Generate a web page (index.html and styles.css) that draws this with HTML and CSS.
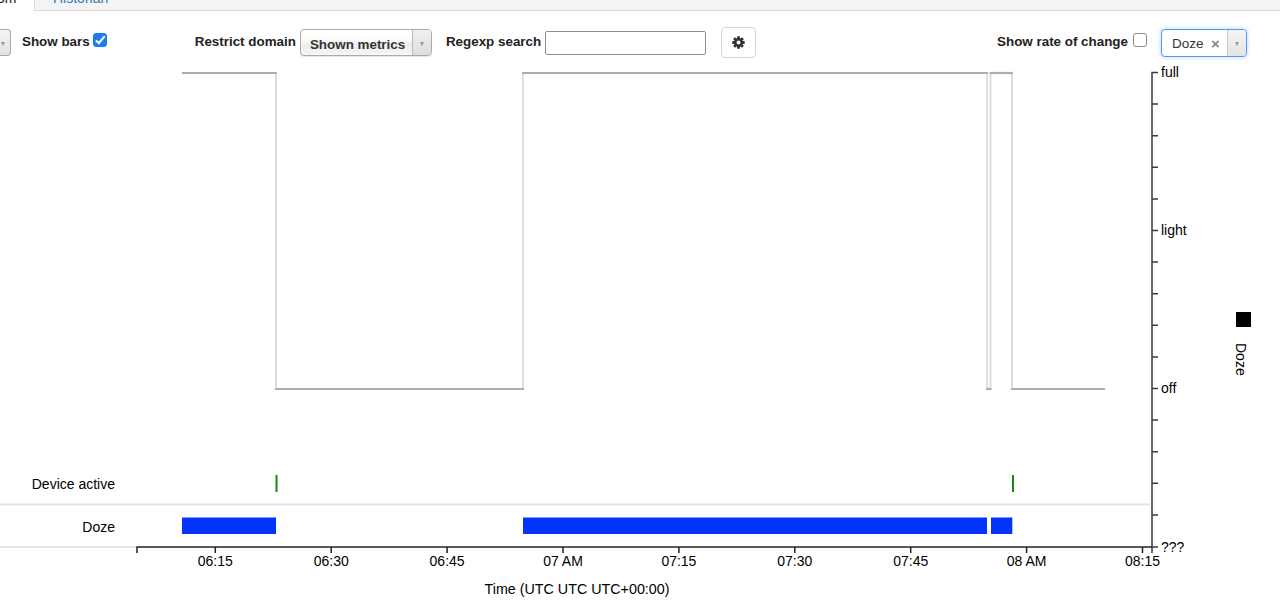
FILE: index.html
```html
<!DOCTYPE html>
<html>
<head>
<meta charset="utf-8">
<title>Historian</title>
<link rel="stylesheet" href="styles.css">
</head>
<body>
<div class="tabs">
  <div class="tab tab-active"><span class="tab-text">om</span></div>
  <div class="tab tab-inactive"><span class="tab-text tab-link">Historian</span></div>
</div>
<div class="controls">
  <div class="stub"><span class="tri"></span></div>
  <span class="lbl lbl-bars">Show bars</span>
  <span class="cb cb-checked"></span>
  <span class="lbl lbl-restrict">Restrict domain</span>
  <div class="chosen chosen-shown">
    <span class="chosen-text">Shown metrics</span>
    <span class="chosen-arrow"><span class="tri"></span></span>
  </div>
  <span class="lbl lbl-regexp">Regexp search</span>
  <span class="search"></span>
  <span class="gear-btn">
    <svg class="gear" width="13" height="13" viewBox="-6.5 -6.5 13 13">
      <g fill="#333">
        <rect x="-1.4" y="-6.2" width="2.8" height="12.4" rx="0.4"/>
        <rect x="-1.4" y="-6.2" width="2.8" height="12.4" rx="0.4" transform="rotate(45)"/>
        <rect x="-1.4" y="-6.2" width="2.8" height="12.4" rx="0.4" transform="rotate(90)"/>
        <rect x="-1.4" y="-6.2" width="2.8" height="12.4" rx="0.4" transform="rotate(135)"/>
        <circle r="4.4"/>
      </g>
      <circle r="1.9" fill="#fff"/>
    </svg>
  </span>
  <div class="right-group">
    <span class="lbl">Show rate of change</span>
    <span class="cb"></span>
    <div class="chosen chosen-doze">
      <span class="doze-text">Doze</span>
      <span class="doze-x">×</span>
      <span class="chosen-arrow doze-arrow"><span class="tri"></span></span>
    </div>
  </div>
</div>
<svg class="chart" width="1280" height="553" viewBox="0 58 1280 553">
  <!-- line series -->
  <g class="vlines" stroke="#dedede" stroke-width="2" fill="none">
    <path d="M276,73V389"/>
    <path d="M523,73V389"/>
    <path d="M987,73V389"/>
    <path d="M990.5,73V389"/>
    <path d="M1012,73V389"/>
  </g>
  <g class="hlines" stroke="#acacac" stroke-width="2.2" fill="none">
    <path d="M182,73H277"/>
    <path d="M275,389H524"/>
    <path d="M522,73H988"/>
    <path d="M986,389H991.5"/>
    <path d="M989.5,73H1013"/>
    <path d="M1011,389H1105"/>
  </g>

  <!-- row separators -->
  <path d="M0,504.5H1150" stroke="#e4e4e4" stroke-width="2"/>
  <path d="M0,547H137" stroke="#e4e4e4" stroke-width="2"/>

  <!-- row labels -->
  <g class="rowlabels" text-anchor="end">
    <text x="115" y="489">Device active</text>
    <text x="115" y="531.5">Doze</text>
  </g>

  <!-- device active ticks -->
  <g stroke="#118c11" stroke-width="2">
    <path d="M276.5,475V492"/>
    <path d="M1013,475V492"/>
  </g>

  <!-- doze bars -->
  <g fill="#0433ff">
    <rect x="182" y="517.5" width="94" height="16.5"/>
    <rect x="523" y="517.5" width="464" height="16.5"/>
    <rect x="991" y="517.5" width="21.3" height="16.5"/>
  </g>

  <!-- y axis -->
  <g class="axis" stroke="#3a3a3a" stroke-width="1.5" fill="none">
    <path d="M1158,72.5H1152V553"/>
    <path d="M1152,104.1H1158M1152,135.7H1158M1152,167.3H1158M1152,198.9H1158M1152,230.5H1158M1152,262.1H1158M1152,293.7H1158M1152,325.3H1158M1152,356.9H1158M1152,388.5H1158M1152,420.1H1158M1152,451.7H1158M1152,483.3H1158M1152,514.9H1158M1152,547H1158"/>
  </g>
  <g class="ticklabels">
    <text x="1161" y="77">full</text>
    <text x="1161" y="235">light</text>
    <text x="1161" y="393">off</text>
    <text x="1161" y="551.5">???</text>
  </g>

  <!-- x axis -->
  <g class="axis" stroke="#222" stroke-width="1.5" fill="none">
    <path d="M137,553V547H1152"/>
    <path d="M215.3,547V553M331.2,547V553M447.1,547V553M563,547V553M678.9,547V553M794.8,547V553M910.7,547V553M1026.6,547V553M1142.5,547V553"/>
  </g>
  <g class="ticklabels" text-anchor="middle">
    <text x="215.3" y="566">06:15</text>
    <text x="331.2" y="566">06:30</text>
    <text x="447.1" y="566">06:45</text>
    <text x="563" y="566">07 AM</text>
    <text x="678.9" y="566">07:15</text>
    <text x="794.8" y="566">07:30</text>
    <text x="910.7" y="566">07:45</text>
    <text x="1026.6" y="566">08 AM</text>
    <text x="1142.5" y="566">08:15</text>
  </g>
  <text class="axis-title" x="577" y="594" text-anchor="middle">Time (UTC UTC UTC+00:00)</text>

  <!-- legend -->
  <rect x="1236" y="312" width="15" height="15" fill="#000"/>
  <text class="legend-text" transform="translate(1236,343) rotate(90)">Doze</text>
</svg>
</body>
</html>
```

FILE: styles.css
```css
html, body {
  margin: 0;
  padding: 0;
  background: #fff;
  overflow: hidden;
}

body {
  font-family: "Liberation Sans", Arial, Helvetica, sans-serif;
  color: #222;
  width: 1280px;
  height: 611px;
}

/* ---------- tabs ---------- */
.tabs {
  display: flex;
  height: 11px;
  overflow: hidden;
}

.tab {
  box-sizing: border-box;
  height: 11px;
  overflow: hidden;
}

.tab-active {
  width: 34px;
  background: #fff;
}

.tab-inactive {
  flex: 1;
  background: #f4f4f4;
  border-left: 1px solid #dcdcdc;
  border-bottom: 1px solid #dcdcdc;
  padding-left: 18px;
}

.tab-text {
  display: block;
  font-size: 14px;
  line-height: 20px;
  margin-top: -12px;
  white-space: nowrap;
  color: #222;
}

.tab-active .tab-text {
  margin-left: -3px;
}

.tab-link {
  color: #337ab7;
}

/* ---------- controls ---------- */
.controls {
  display: flex;
  align-items: center;
  height: 31px;
  margin-top: 16px;
  padding-right: 33px;
  font-size: 13px;
  font-weight: bold;
  color: #222;
}

.lbl {
  white-space: nowrap;
  line-height: 16px;
  font-size: 13.4px;
  position: relative;
  top: -1px;
}

.lbl-bars {
  margin-left: 11px;
}

.lbl-restrict {
  margin-left: 88px;
}

.lbl-regexp {
  margin-left: 14px;
}

.tri {
  display: block;
  width: 0;
  height: 0;
  border-left: 2.5px solid transparent;
  border-right: 2.5px solid transparent;
  border-top: 4px solid #999;
}

.stub {
  box-sizing: border-box;
  width: 11px;
  height: 27px;
  border: 1px solid #aaa;
  border-left: 0;
  border-radius: 0 4px 4px 0;
  background: linear-gradient(#f4f4f4, #e2e2e2);
  display: flex;
  align-items: center;
  padding-left: 1px;
  padding-top: 2px;
}

/* checkbox */
.cb {
  box-sizing: border-box;
  width: 14px;
  height: 14px;
  margin-left: 3px;
  margin-bottom: 6px;
  border: 1px solid #8a8a8a;
  border-radius: 3px;
  background: #fff;
  position: relative;
  flex: none;
}

.cb-checked {
  background: #1d7bf4;
  border-color: #1d7bf4;
}

.cb-checked::after {
  content: "";
  position: absolute;
  left: 4px;
  top: 0.5px;
  width: 3px;
  height: 7.5px;
  border-right: 2px solid #fff;
  border-bottom: 2px solid #fff;
  transform: rotate(40deg);
}

/* chosen selects */
.chosen {
  box-sizing: border-box;
  display: flex;
  align-items: stretch;
  border: 1px solid #aaa;
  border-radius: 4px;
  background: linear-gradient(#fff 20%, #f6f6f6 50%, #eee 52%, #f4f4f4 100%);
  box-shadow: 0 0 3px #fff inset, 0 1px 1px rgba(0, 0, 0, 0.1);
  overflow: hidden;
}

.chosen-shown {
  width: 132px;
  height: 27px;
  margin-left: 4px;
}

.chosen-text {
  flex: 1;
  display: flex;
  align-items: center;
  padding-left: 9px;
  padding-top: 3px;
  font-size: 13.4px;
  white-space: nowrap;
  color: #333;
}

.chosen-arrow {
  width: 19px;
  flex: none;
  border-left: 1px solid #bbb;
  background: linear-gradient(#f0f0f0, #dedede);
  display: flex;
  align-items: center;
  justify-content: center;
  padding-top: 2px;
  box-sizing: border-box;
}

.search {
  box-sizing: border-box;
  width: 161px;
  height: 24px;
  margin-left: 4px;
  border: 1px solid #8f8f8f;
  border-radius: 2px;
  background: #fff;
}

.gear-btn {
  box-sizing: border-box;
  width: 35px;
  height: 31px;
  margin-left: 15px;
  border: 1px solid #d4d4d4;
  border-radius: 4px;
  background: #fff;
  display: flex;
  align-items: center;
  justify-content: center;
}

.gear {
  display: block;
}

.right-group {
  margin-left: auto;
  display: flex;
  align-items: center;
  height: 31px;
}

.right-group .cb {
  margin-left: 5px;
}

.chosen-doze {
  width: 86px;
  height: 28px;
  margin-left: 14px;
  background: #fff;
  border-color: #5897fb;
  box-shadow: 0 0 4px rgba(88, 151, 251, 0.45);
}

.doze-text {
  flex: 1;
  display: flex;
  align-items: center;
  padding-left: 10px;
  padding-top: 2px;
  font-weight: normal;
  font-size: 13.5px;
  color: #333;
}

.doze-x {
  display: flex;
  align-items: center;
  width: 16px;
  font-size: 15px;
  font-weight: bold;
  color: #8a8a8a;
  padding-top: 2px;
}

.doze-arrow {
  width: 19px;
  background: linear-gradient(#f4f4f4, #e4e4e4);
  border-left-color: #c8c8c8;
}

/* ---------- chart ---------- */
.chart {
  display: block;
}

.chart text {
  font-family: "Liberation Sans", Arial, Helvetica, sans-serif;
  font-size: 14px;
  fill: #000;
}

.chart .axis-title {
  font-size: 14.3px;
}
```
